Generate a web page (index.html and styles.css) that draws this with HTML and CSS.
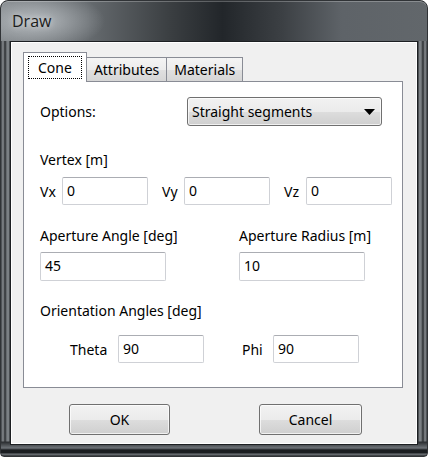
FILE: index.html
```html
<!DOCTYPE html>
<html>
<head>
<meta charset="utf-8">
<link rel="stylesheet" href="styles.css">
</head>
<body>
<div class="window">
  <div class="titlebar"><span class="title">Draw</span></div>
  <div class="client">
    <div class="tabs">
      <div class="tab active"><span class="focus">Cone</span></div>
      <div class="tab">Attributes</div>
      <div class="tab">Materials</div>
    </div>
    <div class="panel">
      <div class="row options">
        <span class="label">Options:</span>
        <div class="select"><span>Straight segments</span><svg width="11" height="6" viewBox="0 0 11 6"><path d="M0 0H11L5.5 6Z" fill="#000"/></svg></div>
      </div>
      <div class="heading vertex">Vertex [m]</div>
      <div class="row xyz">
        <span class="label lx">Vx</span><div class="input w86">0</div>
        <span class="label ly">Vy</span><div class="input w86">0</div>
        <span class="label lz">Vz</span><div class="input w86">0</div>
      </div>
      <div class="row aperture">
        <div class="col">
          <div class="heading">Aperture Angle [deg]</div>
          <div class="input w126">45</div>
        </div>
        <div class="col">
          <div class="heading">Aperture Radius [m]</div>
          <div class="input w126">10</div>
        </div>
      </div>
      <div class="heading orient">Orientation Angles [deg]</div>
      <div class="row angles">
        <span class="label ltheta">Theta</span><div class="input w86">90</div>
        <span class="label lphi">Phi</span><div class="input w86">90</div>
      </div>
    </div>
    <div class="buttons">
      <div class="button">OK</div>
      <div class="button">Cancel</div>
    </div>
  </div>
</div>
</body>
</html>
```
FILE: styles.css
```css
html, body {
  margin: 0;
  padding: 0;
  background: #ffffff;
}
body {
  width: 428px;
  height: 457px;
  overflow: hidden;
  font-family: "Noto Sans", "Open Sans", sans-serif;
}
.window {
  box-sizing: border-box;
  width: 428px;
  height: 457px;
  border: 1px solid #303336;
  border-radius: 8px 8px 4px 4px;
  background:
    linear-gradient(180deg, rgba(0,0,0,0) 0, rgba(0,0,0,0) 440px, #2a2d30 441px, #6e7378 447px, #1a1d20 449px, #1a1d20 452px, #74797e 453px, #303336 455px),
    linear-gradient(90deg, #3b3f43 0, #8a8e92 2px, #2a2d30 4px, #7b8084 6px, #7b8084 8px, #1b1e21 9px, #1b1e21 calc(100% - 9px), #7b8084 calc(100% - 8px), #7b8084 calc(100% - 6px), #2a2d30 calc(100% - 4px), #8a8e92 calc(100% - 2px), #3b3f43 100%);
  padding: 0 9px 11px 9px;
  display: flex;
  flex-direction: column;
  overflow: hidden;
}
.titlebar {
  height: 40px;
  margin: 0 -9px;
  padding: 0 11px;
  background:
    radial-gradient(ellipse 70px 30px at 34px 20px, rgba(205,210,214,0.75), rgba(205,210,214,0) 100%),
    linear-gradient(90deg, #7c8185 0%, #676c70 20%, #3a3e41 40%, #22262a 52%, #3c4044 66%, #5e6368 80%, #62676b 100%);
  box-shadow: inset 0 1px 0 rgba(255,255,255,0.25);
  display: flex;
  align-items: center;
  border-radius: 7px 7px 0 0;
}
.title {
  font-family: "Open Sans", "Noto Sans", sans-serif;
  font-size: 16px;
  color: #1c1c1c;
  margin-top: -1px;
  text-shadow: 0 0 6px rgba(255,255,255,0.6);
}
.client {
  flex: 1;
  background: #f0f0f0;
  border: 1px solid #1c1f22;
  box-shadow: inset 0 0 0 1px #ffffff;
  padding: 11px 14px 0 12px;
  display: flex;
  flex-direction: column;
}
.tabs {
  display: flex;
  align-items: flex-end;
  height: 28px;
  font-size: 14px;
  color: #000;
  position: relative;
  z-index: 1;
}
.tab {
  box-sizing: border-box;
  height: 24px;
  border: 1px solid #898c95;
  border-bottom: none;
  background: linear-gradient(180deg, #f4f4f4 0%, #ececec 50%, #e0e0e0 51%, #d6d6d6 100%);
  padding: 0 7px;
  line-height: 23px;
  margin-left: -1px;
}
.tab.active {
  height: 30px;
  margin-left: 0;
  margin-bottom: -1px;
  background: #ffffff;
  padding: 3px 4px 0 4px;
  position: relative;
  z-index: 2;
}
.focus {
  display: block;
  border: 1px dotted #000;
  padding: 0 9px 0 9px;
  line-height: 21px;
  height: 21px;
}
.panel {
  box-sizing: border-box;
  height: 307px;
  width: 380px;
  border: 1px solid #898c95;
  background: #ffffff;
  padding: 15px 16px 0 16px;
  font-size: 14px;
  color: #000;
}
.row {
  display: flex;
  align-items: center;
}
.label {
  font-size: 14px;
  flex-shrink: 0;
}
.options .label {
  width: 147px;
}
.select {
  box-sizing: border-box;
  flex-shrink: 0;
  width: 195px;
  height: 29px;
  border: 1px solid #707070;
  border-radius: 3px;
  background: linear-gradient(180deg, #f2f2f2 0%, #ebebeb 50%, #dddddd 51%, #cfcfcf 100%);
  box-shadow: inset 0 0 0 1px rgba(255,255,255,0.7);
  display: flex;
  align-items: center;
  justify-content: space-between;
  padding: 0 6px 0 4px;
}
.heading {
  font-size: 14px;
  line-height: 18px;
}
.vertex {
  margin-top: 25px;
}
.xyz {
  margin-top: 8px;
}
.input {
  box-sizing: border-box;
  flex-shrink: 0;
  height: 28px;
  border: 1px solid #cfd1d6;
  border-top-color: #abadb3;
  border-radius: 2px;
  background: #fff;
  font-size: 14px;
  line-height: 26px;
  padding: 0 4px;
}
.w86 { width: 86px; }
.w126 { width: 126px; height: 29px; }
.lx { width: 22px; }
.ly { margin-left: 14px; width: 22px; }
.lz { margin-left: 14px; width: 22px; }
.aperture {
  margin-top: 22px;
  align-items: flex-start;
}
.col {
  width: 199px;
  flex-shrink: 0;
}
.col .heading {
  margin-bottom: 7px;
}
.orient {
  margin-top: 21px;
}
.angles {
  margin-top: 15px;
}
.ltheta { margin-left: 30px; width: 48px; }
.lphi { margin-left: 38px; width: 31px; }
.buttons {
  display: flex;
  padding-left: 46px;
  margin-top: 16px;
}
.button {
  box-sizing: border-box;
  width: 101px;
  height: 31px;
  border: 1px solid #707070;
  border-radius: 3px;
  background: linear-gradient(180deg, #f2f2f2 0%, #ebebeb 50%, #dddddd 51%, #cfcfcf 100%);
  box-shadow: inset 0 0 0 1px rgba(255,255,255,0.7);
  font-size: 14px;
  text-align: center;
  line-height: 29px;
  color: #000;
}
.button + .button {
  margin-left: 89px;
  width: 103px;
}
```
